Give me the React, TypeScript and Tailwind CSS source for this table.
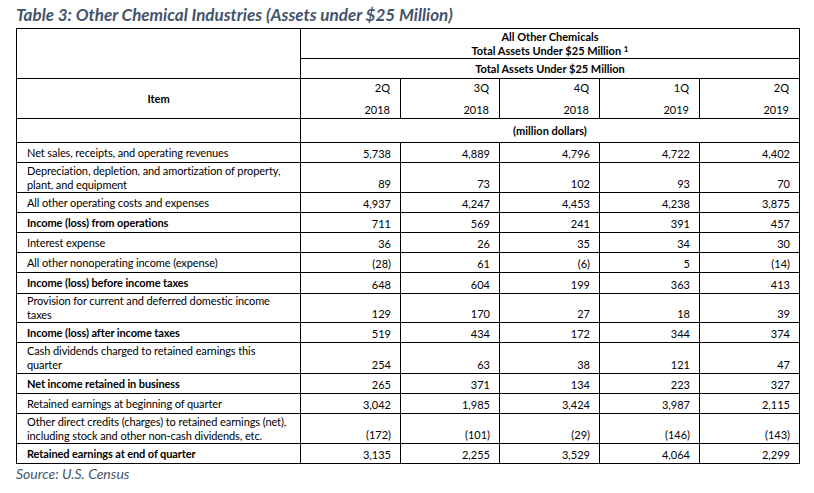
const rows: { label: string; vals: string[]; bold?: boolean; h: string }[] = [
  { label: "Net sales, receipts, and operating revenues", vals: ["5,738", "4,889", "4,796", "4,722", "4,402"], h: "h-[20px]" },
  { label: "Depreciation, depletion, and amortization of property,|plant, and equipment", vals: ["89", "73", "102", "93", "70"], h: "h-[30px]" },
  { label: "All other operating costs and expenses", vals: ["4,937", "4,247", "4,453", "4,238", "3,875"], h: "h-[20px]" },
  { label: "Income (loss) from operations", vals: ["711", "569", "241", "391", "457"], bold: true, h: "h-[20px]" },
  { label: "Interest expense", vals: ["36", "26", "35", "34", "30"], h: "h-[20px]" },
  { label: "All other nonoperating income (expense)", vals: ["(28)", "61", "(6)", "5", "(14)"], h: "h-[20px]" },
  { label: "Income (loss) before income taxes", vals: ["648", "604", "199", "363", "413"], bold: true, h: "h-[21px]" },
  { label: "Provision for current and deferred domestic income|taxes", vals: ["129", "170", "27", "18", "39"], h: "h-[28px]" },
  { label: "Income (loss) after income taxes", vals: ["519", "434", "172", "344", "374"], bold: true, h: "h-[20px]" },
  { label: "Cash dividends charged to retained earnings this|quarter", vals: ["254", "63", "38", "121", "47"], h: "h-[31px]" },
  { label: "Net income retained in business", vals: ["265", "371", "134", "223", "327"], bold: true, h: "h-[20px]" },
  { label: "Retained earnings at beginning of quarter", vals: ["3,042", "1,985", "3,424", "3,987", "2,115"], h: "h-[20px]" },
  { label: "Other direct credits (charges) to retained earnings (net),|including stock and other non-cash dividends, etc.", vals: ["(172)", "(101)", "(29)", "(146)", "(143)"], h: "h-[30px]" },
  { label: "Retained earnings at end of quarter", vals: ["3,135", "2,255", "3,529", "4,064", "2,299"], bold: true, h: "h-[20px]" },
];

const quarters = [
  ["2Q", "2018"],
  ["3Q", "2018"],
  ["4Q", "2018"],
  ["1Q", "2019"],
  ["2Q", "2019"],
];

export default function App() {
  return (
    <div className="w-[814px] h-[493px] bg-white pl-[16px] pt-[4px] text-black font-['Lato',sans-serif]">
      <h1 className="text-[17px] leading-[22px] font-bold italic text-[#44546a]">
        Table 3: Other Chemical Industries (Assets under $25 Million)
      </h1>
      <table className="mt-[2px] table-fixed border-collapse text-[11px] leading-[14px] w-[784px]">
        <colgroup>
          <col className="w-[284px]" />
          <col className="w-[100px]" />
          <col className="w-[99px]" />
          <col className="w-[100px]" />
          <col className="w-[100px]" />
          <col className="w-[100px]" />
        </colgroup>
        <tbody>
          <tr className="h-[30px]">
            <td rowSpan={2} className="border border-black" />
            <td colSpan={5} className="border border-black text-center font-bold leading-[13px]">
              All Other Chemicals
              <br />
              Total Assets Under $25 Million <span className="text-[8px] align-[3px]">1</span>
            </td>
          </tr>
          <tr className="h-[20px]">
            <td colSpan={5} className="border border-black text-center font-bold">
              Total Assets Under $25 Million
            </td>
          </tr>
          <tr className="h-[40px]">
            <td className="border border-black text-center font-bold">Item</td>
            {quarters.map((q, i) => (
              <td key={i} className="border border-black text-right pr-[10px]">
                <div className="flex flex-col gap-[8px]">
                  <span>{q[0]}</span>
                  <span>{q[1]}</span>
                </div>
              </td>
            ))}
          </tr>
          <tr className="h-[24px]">
            <td className="border border-black" />
            <td colSpan={5} className="border border-black text-center font-bold">
              (million dollars)
            </td>
          </tr>
          {rows.map((r) => (
            <tr key={r.label} className={r.h}>
              <td className={`border border-black pl-[10px] pr-[2px] align-middle tracking-[-0.1px] ${r.bold ? "font-bold" : ""}`}>
                {r.label.split("|").map((line, j) => (
                  <div key={j}>{line}</div>
                ))}
              </td>
              {r.vals.map((v, i) => (
                <td key={i} className="border border-black text-right align-bottom pr-[9px] pb-[1px]">
                  {v}
                </td>
              ))}
            </tr>
          ))}
        </tbody>
      </table>
      <p className="mt-[1px] text-[14px] leading-[18px] italic text-[#44546a]">Source: U.S. Census</p>
    </div>
  );
}
